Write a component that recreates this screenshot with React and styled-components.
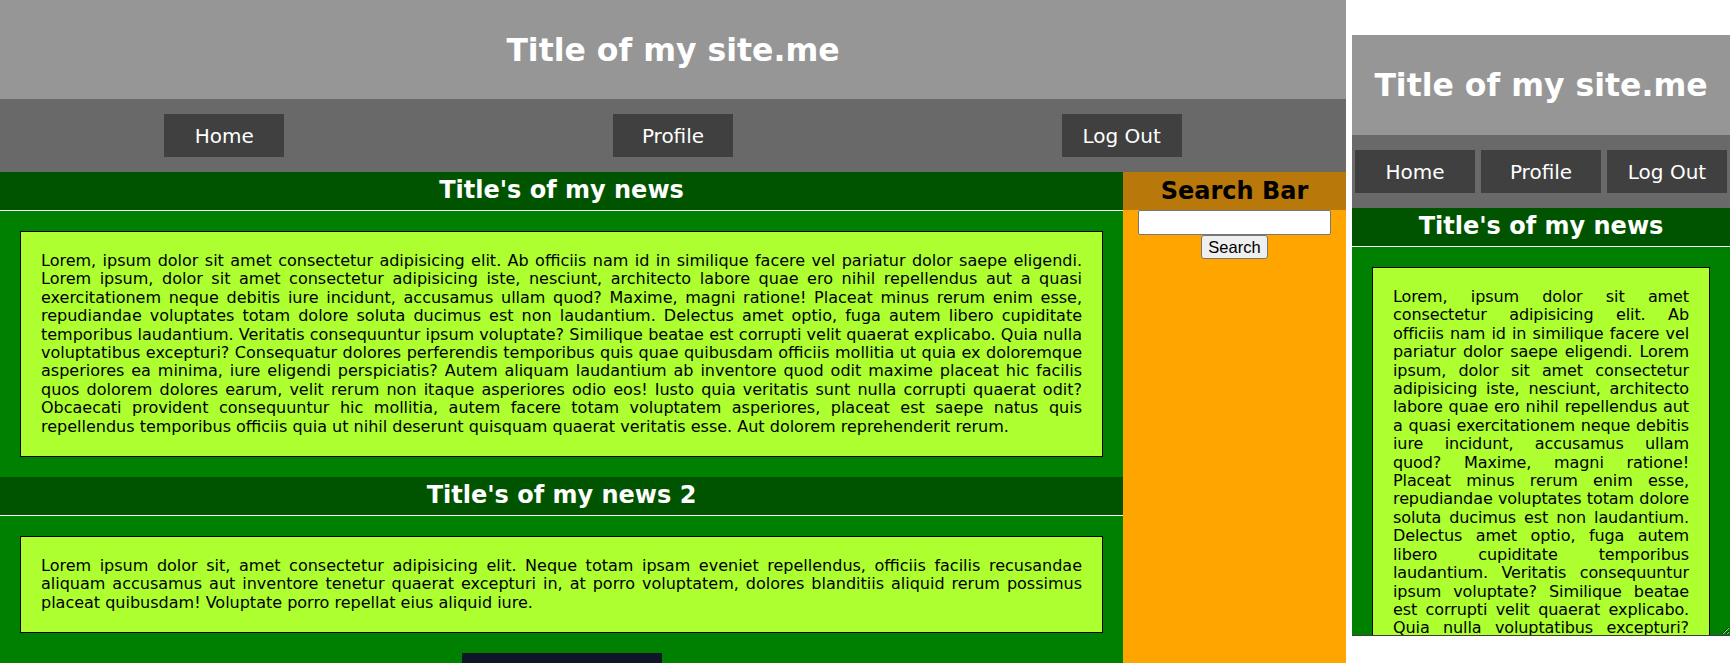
import React from 'react';
import styled, { createGlobalStyle } from 'styled-components';

const GlobalStyle = createGlobalStyle`
  html, body { margin: 0; padding: 0; overflow: hidden; background: #ffffff; }
  body { font-family: "DejaVu Sans", Verdana, sans-serif; }
  * { box-sizing: border-box; }
`;

const Page = styled.div`
  display: flex;
  align-items: flex-start;
  gap: 6px;
`;

const Site = styled.div`
  flex: none;
  width: ${p => (p.$mobile ? '100%' : '1346px')};
`;

const Header = styled.header`
  height: ${p => (p.$mobile ? 100 : 99)}px;
  background: #969696;
  display: flex;
  align-items: center;
  justify-content: center;
`;

const SiteTitle = styled.h1`
  margin: 0;
  color: #ffffff;
  font-size: 31.5px;
  font-weight: bold;
`;

const Nav = styled.nav`
  display: grid;
  grid-template-columns: repeat(3, 1fr);
  justify-items: center;
  padding: 15px 0;
  background: #696969;
`;

const NavButton = styled.a`
  width: 120px;
  height: 43px;
  display: flex;
  align-items: center;
  justify-content: center;
  background: #404040;
  color: #ffffff;
  font-size: 20px;
  text-decoration: none;
`;

const Main = styled.div`
  display: grid;
  grid-template-columns: ${p => (p.$mobile ? '1fr' : '1123px 1fr')};
`;

const NewsColumn = styled.main`
  background: #008000;
`;

const NewsTitle = styled.h2`
  margin: 0;
  padding: 4px 0 5px;
  line-height: 29px;
  font-size: 24px;
  font-weight: bold;
  text-align: center;
  color: #ffffff;
  background: #005400;
  border-bottom: 1px solid #ffffff;
`;

const NewsBody = styled.div`
  padding: 20px;
`;

const Card = styled.p`
  margin: 0;
  padding: 20px;
  background: #adff2f;
  border: 1px solid #000000;
  color: #000000;
  font-size: 16px;
  line-height: 18.4px;
  letter-spacing: ${p => (p.$mobile ? '-0.1px' : 'normal')};
  text-align: justify;
`;

const FooterBlock = styled.div`
  width: 200px;
  height: 60px;
  margin: 0 auto 20px;
  background: #0e1628;
`;

const Aside = styled.aside`
  background: #ffa500;
  display: flex;
  flex-direction: column;
  align-items: center;
`;

const AsideTitle = styled.h2`
  align-self: stretch;
  margin: 0;
  height: 38px;
  line-height: 38px;
  font-size: 24px;
  font-weight: bold;
  text-align: center;
  color: #000000;
  background: #b9780a;
`;

const SearchInput = styled.input`
  width: 193px;
  height: 25px;
  margin: 0;
  border: 1px solid #767676;
  border-radius: 2px;
  background: #ffffff;
  font-size: 16px;
`;

const SearchButton = styled.button`
  height: 24px;
  margin: 0;
  padding: 0 6px;
  border: 1px solid #767676;
  border-radius: 3px;
  background: #efefef;
  color: #000000;
  font-family: "Liberation Sans", Arial, sans-serif;
  font-size: 16.5px;
  line-height: 20px;
`;

const Preview = styled.div`
  flex: none;
  margin-top: 35px;
  width: 378px;
  height: 601px;
  overflow: hidden;
  resize: both;
  border-bottom: 1px solid #3c3c3c;
`;

const news1 =
  'Lorem, ipsum dolor sit amet consectetur adipisicing elit. Ab officiis nam id in similique facere vel pariatur dolor saepe eligendi. Lorem ipsum, dolor sit amet consectetur adipisicing iste, nesciunt, architecto labore quae ero nihil repellendus aut a quasi exercitationem neque debitis iure incidunt, accusamus ullam quod? Maxime, magni ratione! Placeat minus rerum enim esse, repudiandae voluptates totam dolore soluta ducimus est non laudantium. Delectus amet optio, fuga autem libero cupiditate temporibus laudantium. Veritatis consequuntur ipsum voluptate? Similique beatae est corrupti velit quaerat explicabo. Quia nulla voluptatibus excepturi? Consequatur dolores perferendis temporibus quis quae quibusdam officiis mollitia ut quia ex doloremque asperiores ea minima, iure eligendi perspiciatis? Autem aliquam laudantium ab inventore quod odit maxime placeat hic facilis quos dolorem dolores earum, velit rerum non itaque asperiores odio eos! Iusto quia veritatis sunt nulla corrupti quaerat odit? Obcaecati provident consequuntur hic mollitia, autem facere totam voluptatem asperiores, placeat est saepe natus quis repellendus temporibus officiis quia ut nihil deserunt quisquam quaerat veritatis esse. Aut dolorem reprehenderit rerum.';

const news2 =
  'Lorem ipsum dolor sit, amet consectetur adipisicing elit. Neque totam ipsam eveniet repellendus, officiis facilis recusandae aliquam accusamus aut inventore tenetur quaerat excepturi in, at porro voluptatem, dolores blanditiis aliquid rerum possimus placeat quibusdam! Voluptate porro repellat eius aliquid iure.';

function SiteView({ mobile }) {
  return (
    <Site $mobile={mobile}>
      <Header $mobile={mobile}>
        <SiteTitle>Title of my site.me</SiteTitle>
      </Header>
      <Nav>
        <NavButton href="#">Home</NavButton>
        <NavButton href="#">Profile</NavButton>
        <NavButton href="#">Log Out</NavButton>
      </Nav>
      <Main $mobile={mobile}>
        <NewsColumn>
          <NewsTitle>Title's of my news</NewsTitle>
          <NewsBody>
            <Card $mobile={mobile}>{news1}</Card>
          </NewsBody>
          <NewsTitle>Title's of my news 2</NewsTitle>
          <NewsBody>
            <Card $mobile={mobile}>{news2}</Card>
          </NewsBody>
          <FooterBlock />
        </NewsColumn>
        <Aside>
          <AsideTitle>Search Bar</AsideTitle>
          <SearchInput type="text" />
          <SearchButton type="button">Search</SearchButton>
        </Aside>
      </Main>
    </Site>
  );
}

export default function App() {
  return (
    <>
      <GlobalStyle />
      <Page>
        <SiteView />
        <Preview>
          <SiteView mobile />
        </Preview>
      </Page>
    </>
  );
}
